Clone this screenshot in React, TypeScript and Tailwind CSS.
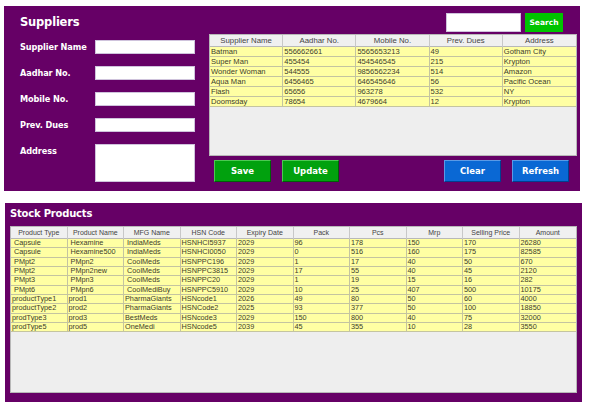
import React from "react";

const suppliers = [
  ["Batman", "556662661", "5565653213", "49", "Gotham City"],
  ["Super Man", "455454", "454546545", "215", "Krypton"],
  ["Wonder Woman", "544555", "9856562234", "514", "Amazon"],
  ["Aqua Man", "6456465", "646545646", "56", "Pacific Ocean"],
  ["Flash", "65656", "963278", "532", "NY"],
  ["Doomsday", "78654", "4679664", "12", "Krypton"],
];

const products = [
  [" Capsule", " Hexamine", " IndiaMeds", "HSNHCI5937", "2029", "96", "178", "150", "170", "26280"],
  [" Capsule", " Hexamine500", " IndiaMeds", "HSNHCI0050", "2029", "0", "516", "160", "175", "82585"],
  [" PMpt2", " PMpn2", " CoolMeds", "HSNPPC196", "2029", "1", "17", "40", "50", "670"],
  [" PMpt2", " PMpn2new", " CoolMeds", "HSNPPC3815", "2029", "17", "55", "40", "45", "2120"],
  [" PMpt3", " PMpn3", " CoolMeds", "HSNPPC20", "2029", "1", "19", "15", "16", "282"],
  [" PMpt6", " PMpn6", " CoolMediBuy", "HSNPPC5910", "2029", "10", "25", "407", "500", "10175"],
  ["productType1", "prod1", "PharmaGiants", "HSNcode1", "2026", "49", "80", "50", "60", "4000"],
  ["productType2", "prod2", "PharmaGiants", "HSNCode2", "2025", "93", "377", "50", "100", "18850"],
  ["prodType3", "prod3", "BestMeds", "HSNcode3", "2029", "150", "800", "40", "75", "32000"],
  ["prodType5", "prod5", "OneMedi", "HSNcode5", "2039", "45", "355", "10", "28", "3550"],
];

const supplierHeaders = ["Supplier Name", "Aadhar No.", "Mobile No.", "Prev. Dues", "Address"];
const productHeaders = [
  "Product Type",
  "Product Name",
  "MFG Name",
  "HSN Code",
  "Expiry Date",
  "Pack",
  "Pcs",
  "Mrp",
  "Selling Price",
  "Amount",
];

const font = { fontFamily: '"Liberation Sans", Arial, sans-serif' };
const boldFont = { fontFamily: '"DejaVu Sans", "Liberation Sans", sans-serif' };

function Field({ label, tall }: { label: string; tall?: boolean }) {
  return (
    <div className={tall ? "flex items-start" : "flex items-center h-[14px]"}>
      <div
        className="w-[75px] shrink-0 text-white font-bold text-[8.2px] leading-[14px] tracking-[-0.1px]"
        style={boldFont}
      >
        {label}
      </div>
      <div
        className={
          "w-[100px] bg-white border border-[#cfc3dc] " + (tall ? "h-[38px]" : "h-[14px]")
        }
      />
    </div>
  );
}

function Btn({ label, blue }: { label: string; blue?: boolean }) {
  return (
    <div
      className={
        "w-[57px] h-[22px] flex items-center justify-center text-white font-bold text-[8.5px] border " +
        (blue
          ? "bg-[#0a68d4] border-t-[#5a9ae6] border-l-[#5a9ae6] border-r-[#003f8f] border-b-[#003f8f]"
          : "bg-[#01a10e] border-t-[#4cc952] border-l-[#4cc952] border-r-[#006008] border-b-[#006008]")
      }
      style={boldFont}
    >
      {label}
    </div>
  );
}

export default function App() {
  return (
    <div className="w-[591px] h-[407px] bg-white relative overflow-hidden" style={font}>
      {/* Suppliers panel */}
      <div className="ml-[4px] mt-[6px] w-[576px] h-[185px] bg-[#660066] flex">
        <div className="w-[205px] shrink-0 pl-[16px] flex flex-col">
          <div
            className="mt-[8px] h-[16px] leading-[16px] text-white font-bold text-[11.5px] tracking-[-0.2px]"
            style={boldFont}
          >
            Suppliers
          </div>
          <div className="mt-[10px] flex flex-col gap-[12px]">
            <Field label="Supplier Name" />
            <Field label="Aadhar No." />
            <Field label="Mobile No." />
            <Field label="Prev. Dues" />
            <Field label="Address" tall />
          </div>
        </div>
        <div className="w-[368px] shrink-0 flex flex-col">
          <div className="mt-[7px] h-[19px] flex">
            <div className="ml-[237px] w-[75px] h-[19px] bg-white border border-[#cfc3dc]" />
            <div
              className="ml-[4px] w-[38px] h-[19px] bg-[#00c400] flex items-center justify-center text-white font-bold text-[7.5px]"
              style={boldFont}
            >
              Search
            </div>
          </div>
          <div className="mt-[2px] h-[122px] bg-[#eeeeee] border border-[#b8b8b8] flex flex-col">
            <div className="grid grid-cols-5 h-[12px] bg-[#f0f0f0] border-b border-[#b8b8b8]">
              {supplierHeaders.map((h) => (
                <div
                  key={h}
                  className="border-r border-[#c8c8c8] last:border-r-0 text-center text-[7.8px] leading-[12px] text-[#444]"
                >
                  {h}
                </div>
              ))}
            </div>
            {suppliers.map((r, i) => (
              <div key={i} className="grid grid-cols-5 h-[10px] bg-[#ffffa3] border-b border-[#c4c4a0]">
                {r.map((c, j) => (
                  <div
                    key={j}
                    className="border-r border-[#c4c4a0] last:border-r-0 pl-[1px] text-[7.6px] leading-[9px] text-[#3d3d2a] whitespace-pre overflow-hidden"
                  >
                    {c}
                  </div>
                ))}
              </div>
            ))}
          </div>
          <div className="mt-[4px] flex">
            <div className="ml-[5px]">
              <Btn label="Save" />
            </div>
            <div className="ml-[11px]">
              <Btn label="Update" />
            </div>
            <div className="ml-[105px]">
              <Btn label="Clear" blue />
            </div>
            <div className="ml-[11px]">
              <Btn label="Refresh" blue />
            </div>
          </div>
        </div>
      </div>

      {/* Stock Products panel */}
      <div className="ml-[5px] mt-[12px] w-[577px] h-[199px] bg-[#660066] flex flex-col pl-[5px]">
        <div
          className="mt-[3px] h-[15px] leading-[15px] text-white font-bold text-[10px] tracking-[-0.2px]"
          style={boldFont}
        >
          Stock Products
        </div>
        <div className="mt-[5px] w-[567px] h-[167px] bg-[#eeeeee] border border-[#b8b8b8] flex flex-col">
          <div className="grid grid-cols-10 h-[12px] bg-[#f0f0f0] border-b border-[#b8b8b8]">
            {productHeaders.map((h) => (
              <div
                key={h}
                className="border-r border-[#c8c8c8] last:border-r-0 text-center text-[7px] leading-[12px] text-[#444]"
              >
                {h}
              </div>
            ))}
          </div>
          {products.map((r, i) => (
            <div key={i} className="grid grid-cols-10 h-[9.35px] bg-[#ffffa3] border-b border-[#c4c4a0]">
              {r.map((c, j) => (
                <div
                  key={j}
                  className="border-r border-[#c4c4a0] last:border-r-0 pl-[1px] text-[7.3px] leading-[8.5px] text-[#3d3d2a] whitespace-pre overflow-hidden"
                >
                  {c}
                </div>
              ))}
            </div>
          ))}
        </div>
      </div>
    </div>
  );
}
